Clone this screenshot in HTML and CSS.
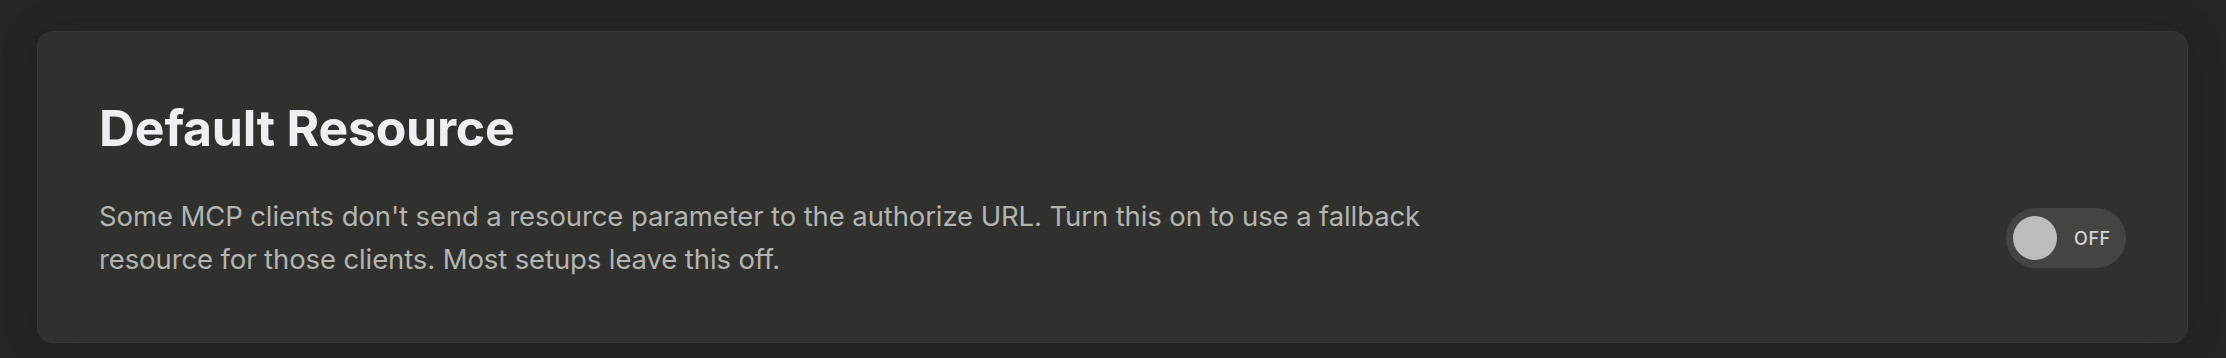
FILE: index.html
```html
<!DOCTYPE html>
<html lang="en">
<head>
<meta charset="utf-8">
<title>Default Resource</title>
<link rel="stylesheet" href="styles.css">
</head>
<body>
<main class="page">
  <section class="card">
    <h2 class="card-title">Default Resource</h2>
    <div class="setting-row">
      <p class="setting-desc">Some MCP clients don't send a resource parameter to the authorize URL. Turn this on to use a fallback resource for those clients. Most setups leave this off.</p>
      <button class="toggle" type="button" role="switch" aria-checked="false">
        <span class="toggle-knob"></span>
        <span class="toggle-label">OFF</span>
      </button>
    </div>
  </section>
</main>
</body>
</html>
```

FILE: styles.css
```css
* { box-sizing: border-box; }

html, body {
  margin: 0;
  padding: 0;
  background: #252624;
  font-family: Inter, "Noto Sans", "Liberation Sans", sans-serif;
}

.page {
  padding: 31px 38px 15px 37px;
}

.card {
  background: #30312f;
  border: 1px solid rgba(255, 255, 255, 0.035);
  border-radius: 16px;
  padding: 61px 61px 61px 61px;
  box-shadow: 0 0 40px rgba(0, 0, 0, 0.12);
}

.card-title {
  margin: 0;
  font-size: 50px;
  line-height: 70px;
  font-weight: 700;
  color: #eeeff1;
  letter-spacing: -0.25px;
}

.setting-row {
  margin-top: 32px;
  display: flex;
  align-items: center;
  justify-content: space-between;
  gap: 40px;
}

.setting-desc {
  margin: 0;
  max-width: 1360px;
  font-size: 27.5px;
  line-height: 43px;
  letter-spacing: -0.11px;
  color: #b4b5b1;
}

.toggle {
  flex: none;
  display: flex;
  align-items: center;
  width: 120px;
  height: 60px;
  padding: 0 0 0 7px;
  border: none;
  border-radius: 30px;
  background: #444543;
  cursor: pointer;
  font-family: inherit;
}

.toggle-knob {
  width: 44px;
  height: 44px;
  border-radius: 50%;
  background: #bcbcba;
}

.toggle-label {
  margin-left: 17px;
  font-size: 18px;
  font-weight: 500;
  letter-spacing: 0.6px;
  color: #d6d6d4;
}
```
